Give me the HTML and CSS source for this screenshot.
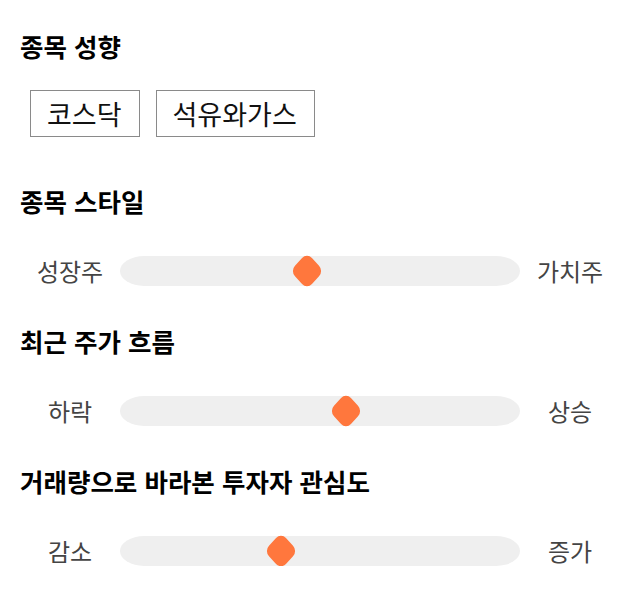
FILE: index.html
```html
<!DOCTYPE html>
<html lang="ko">
<head>
<meta charset="utf-8">
<link rel="stylesheet" href="styles.css">
</head>
<body>
<div class="page">
  <section class="section">
    <h2 class="title">종목 성향</h2>
    <div class="chips">
      <span class="chip">코스닥</span>
      <span class="chip">석유와가스</span>
    </div>
  </section>
  <section class="section">
    <h2 class="title">종목 스타일</h2>
    <div class="slider-row">
      <span class="label">성장주</span>
      <div class="track"><span class="thumb" style="left: 46.75%"></span></div>
      <span class="label">가치주</span>
    </div>
  </section>
  <section class="section">
    <h2 class="title">최근 주가 흐름</h2>
    <div class="slider-row">
      <span class="label">하락</span>
      <div class="track"><span class="thumb" style="left: 56.4%"></span></div>
      <span class="label">상승</span>
    </div>
  </section>
  <section class="section">
    <h2 class="title">거래량으로 바라본 투자자 관심도</h2>
    <div class="slider-row">
      <span class="label">감소</span>
      <div class="track"><span class="thumb" style="left: 40.25%"></span></div>
      <span class="label">증가</span>
    </div>
  </section>
</div>
</body>
</html>
```

FILE: styles.css
```css
html, body {
  margin: 0;
  padding: 0;
  background: #ffffff;
}
body {
  font-family: "Noto Sans CJK KR", "Noto Sans", sans-serif;
  color: #000;
}
.page {
  padding: 30px 20px 0 20px;
}
.title {
  margin: 0;
  font-size: 25.5px;
  font-weight: 700;
  line-height: 32px;
  height: 32px;
  white-space: nowrap;
}
.chips {
  display: flex;
  gap: 16px;
  margin: 28px 0 0 10px;
  height: 47px;
}
.chip {
  box-sizing: border-box;
  display: flex;
  align-items: center;
  height: 47px;
  padding: 0 17px 0 16px;
  border: 1px solid #8a8a8a;
  font-size: 27px;
  line-height: 45px;
  color: #111;
}
.section + .section {
  margin-top: 39px;
}
.section:first-child {
  padding-bottom: 9px;
}
.slider-row {
  display: grid;
  grid-template-columns: 100px 1fr 100px;
  align-items: center;
  margin-top: 39px;
  height: 30px;
}
.label {
  text-align: center;
  font-size: 24px;
  color: #444;
  line-height: 30px;
}
.track {
  position: relative;
  height: 30px;
  background: #efefef;
  border-radius: 24px / 15px;
}
.thumb {
  position: absolute;
  top: 50%;
  width: 24px;
  height: 24px;
  margin: -12px 0 0 -12px;
  background: #ff773d;
  border-radius: 7px;
  transform: scaleY(1.08) rotate(45deg);
}
```
